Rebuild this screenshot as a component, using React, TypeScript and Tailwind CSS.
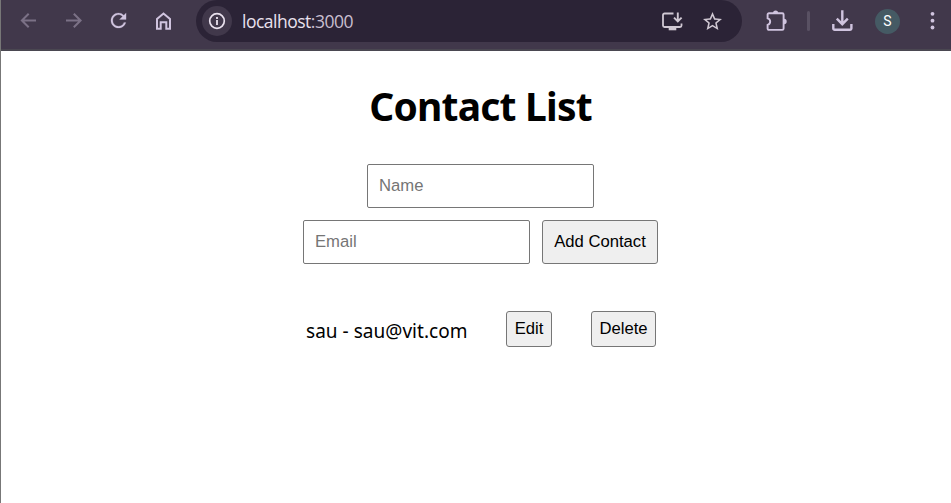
import React from "react";

function Icon({ className, children }: { className: string; children: React.ReactNode }) {
  return (
    <svg viewBox="0 0 24 24" fill="none" stroke="currentColor" strokeWidth="2" className={`h-6 w-6 shrink-0 ${className}`}>
      {children}
    </svg>
  );
}

function Toolbar() {
  return (
    <header className="flex h-[51px] items-start border-b-2 border-[#4a4751] bg-[#41384b] text-[#d0c4df]">
      <div className="flex h-[42px] w-full items-center">
        <Icon className="ml-4 text-[#7b7186]">
          <path d="M19 11.5H5.500M11.700 4.700 4.900 11.500l6.800 6.800" />
        </Icon>
        <Icon className="ml-[21px] text-[#7b7186]">
          <path d="M4 11.500h14M11.800 4.700l6.800 6.800-6.800 6.800" />
        </Icon>
        <Icon className="ml-[21px]">
          <path
            transform="translate(0.1 0.1) scale(0.95)"
            fill="currentColor"
            stroke="currentColor"
            strokeWidth="0.2"
            d="M17.65 6.35A7.958 7.958 0 0 0 12 4c-4.42 0-7.99 3.58-7.99 8s3.57 8 7.99 8c3.73 0 6.84-2.55 7.73-6h-2.08A5.99 5.99 0 0 1 12 18c-3.31 0-6-2.69-6-6s2.690-6 6-6c1.660 0 3.140.690 4.220 1.780L13 11h7V4l-2.350 2.350z"
          />
        </Icon>
        <Icon className="ml-[21px]">
          <path d="M5 19.700V9.900l6.500-5.400L18 9.900v9.800h-3.700v-6.400H8.700v6.400z" />
        </Icon>
        <div className="ml-5 flex h-[42px] w-[546px] shrink-0 items-center rounded-full bg-[#2b2336]">
          <div className="ml-1.5 flex h-[30px] w-[30px] items-center justify-center rounded-full bg-[#41384b] text-[#e9e1ee]">
            <Icon className="">
              <circle cx="12" cy="12" r="7.300" strokeWidth="1.700" />
              <path d="M12 11v5M12 8v1.900" strokeWidth="1.800" />
            </Icon>
          </div>
          <div className="ml-2.5 w-[412px] whitespace-nowrap font-['Open_Sans','Noto_Sans',sans-serif] text-[17.5px] leading-6 tracking-[-0.5px] text-[#e9e1ee]">
            localhost<span className="text-[#c9bfd0]">:3000</span>
          </div>
          <Icon className="ml-1.5 text-[#d0c8d3]">
            <path d="M13.500 4.500H4.500a1.500 1.500 0 0 0-1.500 1.500v10.500a1.500 1.500 0 0 0 1.500 1.500h15.500a1.500 1.500 0 0 0 1.500-1.500v-2" strokeWidth="1.800" />
            <path d="M17.800 3.500v8.500M14 8.700l3.800 3.800 3.800-3.800" strokeWidth="1.900" />
            <path d="M8.700 18h7.600v3.300H8.700z" fill="currentColor" stroke="none" />
          </Icon>
          <Icon className="ml-4 text-[#d0c8d3]">
            <path
              transform="translate(1.1 1.1) scale(0.95)"
              fill="currentColor"
              stroke="none"
              d="M22 9.240l-7.190-.620L12 2 9.190 8.630 2 9.240l5.460 4.730L5.820 21 12 17.270 18.180 21l-1.630-7.030L22 9.240zM12 15.400l-3.760 2.270 1-4.280-3.320-2.880 4.380-.380L12 6.100l1.710 4.040 4.380.380-3.320 2.880 1 4.280L12 15.400z"
            />
          </Icon>
        </div>
        <Icon className="ml-[22px]">
          <path d="M4.900 4.200h13.400a1.300 1.300 0 0 1 1.300 1.300v14.100a1.300 1.300 0 0 1-1.300 1.300H4.900a1.300 1.300 0 0 1-1.300-1.300v-3.700a3.400 3.400 0 0 0 0-6.600V5.500a1.300 1.300 0 0 1 1.300-1.300z" strokeWidth="1.900" />
          <path d="M9 4a2.600 2.600 0 0 1 5.200 0M20 9.800a2.700 2.700 0 0 1 0 5.400" fill="currentColor" stroke="none" />
        </Icon>
        <div className="ml-[19px] h-5 w-[3px] shrink-0 rounded-full bg-[#595163]" />
        <Icon className="ml-5">
          <path d="M12.300 1.300v14M6.800 9.700l5.500 5.500 5.500-5.500M3.300 15v4.500a1.300 1.300 0 0 0 1.300 1.300h15.500a1.300 1.300 0 0 0 1.300-1.300V15" strokeWidth="2.400" />
        </Icon>
        <div className="ml-[21px] flex h-[25px] w-[25px] shrink-0 items-center justify-center rounded-full bg-[#455a64] font-[Roboto,sans-serif] text-[14px] text-white">S</div>
        <svg viewBox="0 0 24 24" fill="currentColor" className="ml-5 h-6 w-6 shrink-0">
          <circle cx="12.500" cy="4.800" r="1.900" />
          <circle cx="12.500" cy="11.700" r="1.900" />
          <circle cx="12.500" cy="18.500" r="1.900" />
        </svg>
      </div>
    </header>
  );
}

const field =
  "h-11 w-[227px] rounded-[2px] border border-[#767676] bg-white px-[11px] font-['Liberation_Sans',Arial,sans-serif] text-[16.67px] text-black placeholder:text-[#757575] outline-none";
const button =
  "rounded-[3px] border border-[#767676] bg-[#efefef] pb-0.5 text-center font-['Liberation_Sans',Arial,sans-serif] text-[16.67px] text-black whitespace-nowrap";

export default function App() {
  return (
    <div className="h-[503px] w-[951px] overflow-hidden border-l border-[#777777] bg-white font-['Noto_Sans','Open_Sans',sans-serif] text-black">
      <Toolbar />
      <main className="flex flex-col items-center pl-[9px]">
        <h1 className="mt-7 h-[54px] whitespace-nowrap text-[39px] font-bold leading-[54px] tracking-[-0.8px]">Contact List</h1>
        <form className="mt-[31px] flex flex-col items-center gap-3" onSubmit={(e) => e.preventDefault()}>
          <input className={field} placeholder="Name" />
          <div className="flex gap-3">
            <input className={field} placeholder="Email" />
            <button className={`${button} h-11 w-[116px]`}>Add Contact</button>
          </div>
        </form>
        <div className="mt-[47px] flex w-[351px] items-center">
          <span className="w-[201px] whitespace-nowrap pl-px pt-1 text-[19px] leading-7 tracking-[0.03px]">sau - sau@vit.com</span>
          <button className={`${button} h-9 w-[46px]`}>Edit</button>
          <button className={`${button} ml-[39px] h-9 w-[65px]`}>Delete</button>
        </div>
      </main>
    </div>
  );
}
